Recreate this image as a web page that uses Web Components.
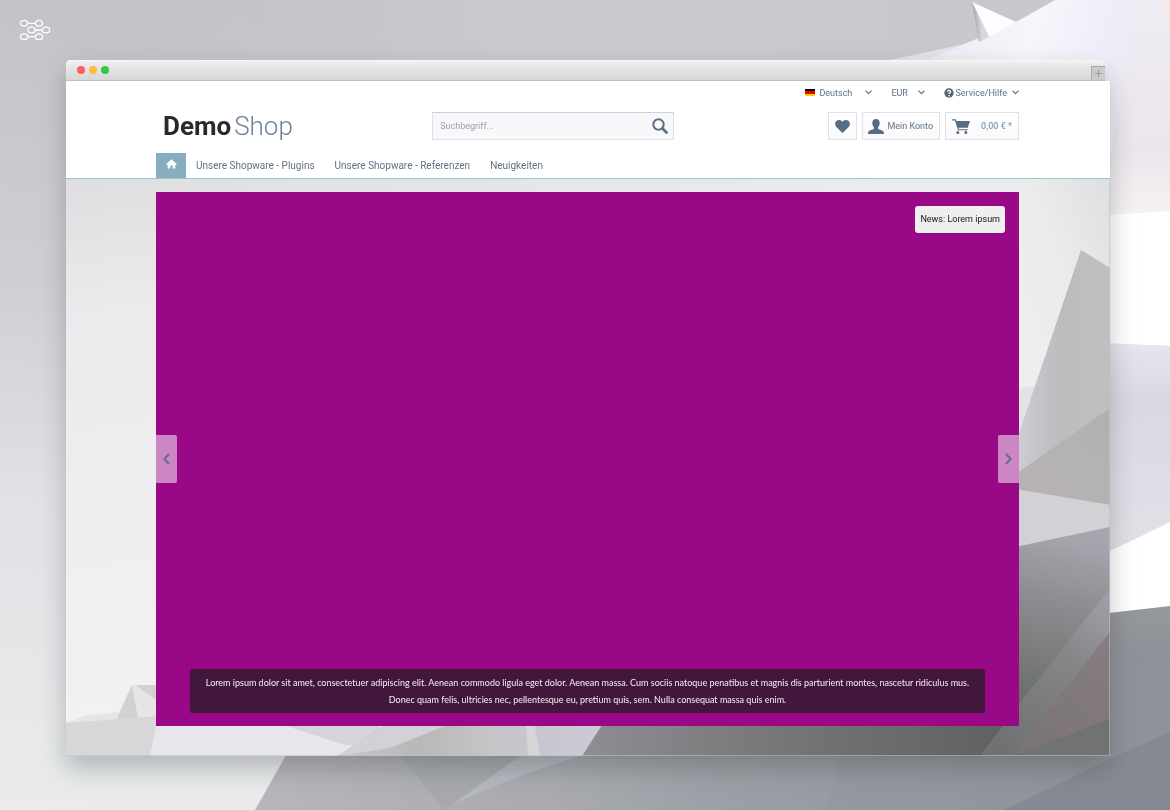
<!DOCTYPE html>
<html lang="de">
<head>
<meta charset="utf-8">
<meta name="viewport" content="width=device-width, initial-scale=1">
<title>DemoShop</title>
<style>
  html { height: 100%; }
  body { margin: 0; min-height: 100%; display: grid; background: #dcdce0; font-family: "Roboto", "Liberation Sans", sans-serif; font-size: 9px; color: #5f7285; }
</style>
</head>
<body>
<demo-page>
  <browser-window>
    <shop-header>
      <shop-action slot="actions" icon="heart" label="Merkzettel"></shop-action>
      <shop-action slot="actions" icon="user">Mein Konto</shop-action>
      <shop-action slot="actions" icon="cart" price>0,00 € *</shop-action>
    </shop-header>
    <shop-stage>
      <banner-slider>
        <span slot="news">News: Lorem ipsum</span>
        Lorem ipsum dolor sit amet, consectetuer adipiscing elit. Aenean commodo ligula eget dolor. Aenean massa. Cum sociis natoque penatibus et magnis dis parturient montes, nascetur ridiculus mus. Donec quam felis, ultricies nec, pellentesque eu, pretium quis, sem. Nulla consequat massa quis enim.
      </banner-slider>
    </shop-stage>
  </browser-window>
</demo-page>

<script>
const define = (name, markup, setup) => {
  const template = document.createElement('template');
  template.innerHTML = markup;
  customElements.define(name, class extends HTMLElement {
    constructor() {
      super();
      this.attachShadow({ mode: 'open' }).append(template.content.cloneNode(true));
    }
    connectedCallback() { if (setup) setup(this, this.shadowRoot); }
  });
};

define('demo-page', `
<style>
  :host { display: block; position: relative; overflow: hidden; box-sizing: border-box; padding: 60px 60px 54px 66px; }
  .backdrop { position: absolute; inset: 0; width: 100%; height: 100%; }
  .mark { position: absolute; left: 19px; top: 19px; width: 32px; height: 22px; }
  .frame { position: relative; }
</style>
<svg class="backdrop" viewBox="0 0 1170 810" preserveAspectRatio="none" aria-hidden="true">
  <defs>
    <linearGradient id="base" x1="0.1" y1="0" x2="0" y2="1"><stop offset="0" stop-color="#c4c2c9"/><stop offset=".35" stop-color="#cfced4"/><stop offset=".62" stop-color="#e1e2e5"/><stop offset="1" stop-color="#e9ebec"/></linearGradient>
    <linearGradient id="top" x1="0" y1="0" x2="1" y2="0"><stop offset="0" stop-color="#c2c0c7" stop-opacity="0"/><stop offset=".5" stop-color="#cccad0"/><stop offset="1" stop-color="#c8c7cc"/></linearGradient>
    <linearGradient id="wing" x1="0" y1="0" x2="1" y2=".25"><stop offset="0" stop-color="#e9e8f2"/><stop offset=".45" stop-color="#f6f6fc"/><stop offset="1" stop-color="#e7e6f4"/></linearGradient>
    <linearGradient id="facet" x1="0" y1="0" x2="0" y2="1"><stop offset="0" stop-color="#efecf3"/><stop offset=".7" stop-color="#ebe6ec"/><stop offset="1" stop-color="#f6f1f3"/></linearGradient>
    <linearGradient id="spike" x1="0" y1=".3" x2=".45" y2=".2"><stop offset="0" stop-color="#9d9ba2"/><stop offset="1" stop-color="#d8d7dc"/></linearGradient>
    <linearGradient id="lav" x1="0" y1="0" x2="0" y2="1"><stop offset="0" stop-color="#e7e5ee"/><stop offset=".25" stop-color="#dad8e3"/><stop offset="1" stop-color="#e3e0e7"/></linearGradient>
    <linearGradient id="floor" x1="0" y1="0" x2="1" y2="0"><stop offset="0" stop-color="#b6b7bb"/><stop offset=".35" stop-color="#a8aaaf"/><stop offset=".55" stop-color="#9ca0a6"/><stop offset="1" stop-color="#8f9399"/></linearGradient>
    <linearGradient id="fade" x1="0" y1="0" x2="0" y2="1"><stop offset="0" stop-color="#96989b"/><stop offset=".25" stop-color="#8d9299"/><stop offset="1" stop-color="#8f9399"/></linearGradient>
  </defs>
  <path fill="url(#base)" d="M0 0H1170V810H0z"/>
  <path fill="url(#top)" d="M0 0H1060V70H0z"/>
  <path fill="#e4e3ec" d="M890 60L960 45 989 37 940 60z"/>
  <path fill="url(#wing)" d="M918 64L1016 22 1055 0H1170V350H1100V64z"/>
  <path fill="#fdfdff" d="M972 2L1016 22 989 37z"/>
  <path fill="url(#spike)" d="M972 2L989 37 979 42z"/>
  <path fill="url(#facet)" d="M1136 0H1170V211L1110 214V160z"/>
  <path fill="#f5e9ec" d="M1158 0H1170V26z"/>
  <path fill="#fff" d="M1100 215L1170 211V346L1100 343z"/>
  <path fill="url(#lav)" d="M1100 343L1170 346V522L1100 556z"/>
  <path fill="#fff" d="M1100 556L1170 522V607L1100 614z"/>
  <path fill="url(#floor)" d="M289 750H1102V810H255z"/>
  <path fill="url(#fade)" d="M1100 614L1170 606V810H1100z"/>
  <path fill="#bbbcc6" opacity=".75" d="M520 756H580Q510 777 445 808z"/>
  <path fill="#a0a2a8" opacity=".5" d="M400 756H520L445 810z"/>
  <path fill="#92949a" opacity=".4" d="M840 756H1050V810H826z"/>
  <path fill="#858a93" d="M1170 732V810H1004L1112 758z"/>
</svg>
<svg class="mark" viewBox="0 0 32 22" fill="none" stroke="#fff" stroke-width="1.3" aria-hidden="true">
  <ellipse cx="5" cy="4.300" rx="3.600" ry="2.900"/><ellipse cx="20" cy="4.300" rx="3.600" ry="2.900"/><ellipse cx="12.500" cy="11" rx="3.600" ry="2.900"/><ellipse cx="27" cy="11" rx="3.600" ry="2.900"/><ellipse cx="5" cy="17.700" rx="3.600" ry="2.900"/><ellipse cx="20" cy="17.700" rx="3.600" ry="2.900"/>
  <path d="M8.600 4.300h7.800M16 11h7.500M8.600 17.700h7.800"/>
</svg>
<div class="frame"><slot></slot></div>`);

define('browser-window', `
<style>
  :host { display: block; filter: drop-shadow(0 12px 13px rgba(40,45,50,.28)); }
  .bar { display: flex; align-items: center; height: 21px; box-sizing: border-box; margin-right: 5px; padding-left: 11px; gap: 4px; border-radius: 4px 4px 0 0; border-bottom: 1px solid #bebebe; background: linear-gradient(#f5f5f5, #ebebeb 20%, #d6d6d6); }
  i { width: 8px; height: 8px; border-radius: 50%; background: var(--dot); }
  button { margin-left: auto; align-self: flex-end; width: 14px; height: 14px; padding: 0; border: solid #a9a9a9; border-width: 1px 0 0 1px; background: #cacaca; display: grid; place-items: center; }
  svg { width: 7px; height: 7px; }
</style>
<div class="bar"><i style="--dot:#fc605c"></i><i style="--dot:#fdbc40"></i><i style="--dot:#34c84a"></i>
  <button type="button" aria-label="Neuer Tab"><svg viewBox="0 0 7 7"><path d="M3.500 0v7M0 3.500h7" stroke="#999" fill="none"/></svg></button></div>
<slot></slot>`);

define('shop-header', `
<style>
  :host { display: block; background: #fff; border-bottom: 1px solid #9cc3cf; padding: 0 91px 0 90px; }
  .top { display: flex; justify-content: flex-end; align-items: center; height: 23px; }
  .pick { display: flex; align-items: center; }
  .flag { width: 10px; height: 7px; margin-right: 4px; background: linear-gradient(#000 33%, #e00 33% 66%, #fc0 66%); }
  select, .service { appearance: none; font: inherit; color: inherit; border: 0; padding: 0; background: none; }
  select { width: 46px; }
  .currency { margin-left: 19px; }
  .currency select { width: 27px; }
  .chev { width: 7px; height: 5px; fill: none; stroke: #5f7285; stroke-width: 1.200; }
  .service { display: flex; align-items: center; margin-left: 19px; gap: 1px; }
  .service .chev { margin-left: 4px; }
  .help { width: 10px; height: 10px; }
  .main { display: grid; grid-template-columns: 32% 28% 1fr; align-items: center; height: 28px; margin-top: 8px; }
  .logo { padding-left: 7px; font-size: 26px; line-height: 28px; color: #6c8096; font-weight: 300; text-decoration: none; display: flex; gap: 3px; }
  .logo b { color: #26292d; font-weight: 700; }
  form { display: flex; align-items: center; height: 28px; box-sizing: border-box; border: 1px solid #dfdfea; border-top-color: #cfcfe0; background: #f8f8fb; }
  input { flex: 1; min-width: 0; border: 0; background: none; padding: 0 7px; font: inherit; color: inherit; outline: 0; }
  input::placeholder { color: #94a2b2; opacity: 1; }
  form button { border: 0; background: none; padding: 0 5px 0 0; display: flex; }
  form svg { width: 16px; height: 16px; }
  .actions { display: flex; justify-content: flex-end; gap: 5px; }
  nav { display: flex; height: 25px; margin-top: 13px; font-size: 10px; }
  nav a { display: flex; align-items: center; color: inherit; text-decoration: none; margin-left: 20px; }
  nav a.home { width: 30px; justify-content: center; background: #86aebf; margin: 0 -10px 0 0; }
  .home svg { width: 11px; height: 10px; margin-bottom: 3px; }
</style>
<div class="top">
  <label class="pick"><span class="flag"></span><select aria-label="Sprache"><option>Deutsch</option></select><svg class="chev" viewBox="0 0 7 5"><path d="M.5.700l3 3 3-3"/></svg></label>
  <label class="pick currency"><select aria-label="Währung"><option>EUR</option></select><svg class="chev" viewBox="0 0 7 5"><path d="M.5.700l3 3 3-3"/></svg></label>
  <button class="service" type="button"><svg class="help" viewBox="0 0 10 10"><circle cx="5" cy="5" r="4.700" fill="#52677e"/><path d="M3.400 3.800Q3.500 2.300 5 2.300T6.600 3.800C6.600 4.900 5 4.800 5 6.100" fill="none" stroke="#fff" stroke-width="1.300"/><circle cx="5" cy="7.700" r=".8" fill="#fff"/></svg><span>Service/Hilfe</span><svg class="chev" viewBox="0 0 7 5"><path d="M.5.700l3 3 3-3"/></svg></button>
</div>
<div class="main">
  <a class="logo" href="#"><b>Demo</b><span>Shop</span></a>
  <form role="search"><input type="text" placeholder="Suchbegriff..." aria-label="Suchbegriff"><button type="button" aria-label="Suchen"><svg viewBox="0 0 16 16" fill="none" stroke="#5b7088"><circle cx="6.500" cy="6.500" r="5.200" stroke-width="2"/><path d="M10.500 10.500l4 4" stroke-width="2.800" stroke-linecap="round"/></svg></button></form>
  <div class="actions"><slot name="actions"></slot></div>
</div>
<nav>
  <a class="home" href="#" aria-label="Startseite"><svg viewBox="0 0 11 10"><path fill="#fff" d="M5.500.3L.2 5.300l.6.600h.9V9.500h2.600V6.500h2.400v3h2.600V5.900h.9l.6-.6z"/></svg></a>
  <a href="#">Unsere Shopware - Plugins</a><a href="#">Unsere Shopware - Referenzen</a><a href="#">Neuigkeiten</a>
</nav>`);

const actionIcons = {
  heart: '<svg width="15" height="13" viewBox="0 0 15 13"><path d="M7.500 13L1.300 7C-.3 5.300-.2 2.500 1.400 1.100 3.100-.4 5.900-.3 7.500 1.700 9.100-.3 11.900-.4 13.600 1.100c1.600 1.400 1.700 4.200.1 5.900z"/></svg>',
  user: '<svg width="16" height="15" viewBox="0 0 16 15"><path d="M8 0c2.500 0 3.800 1.700 3.700 4.200-.1 2-.9 3.300-1.700 4.200v1.400c1 1 5.100 1.300 5.800 3.300l.2 1.900H0l.2-1.900c.7-2 4.800-2.300 5.800-3.300V8.400C5.200 7.500 4.400 6.200 4.300 4.200 4.200 1.700 5.500 0 8 0z"/></svg>',
  cart: '<svg width="18" height="15" viewBox="0 0 18 15"><path d="M0 .2h3.600l.7 1.900H18l-2.300 6.700H6.500l.5 1.500h8.700v1H6.100L2.900 1.500H0z"/><circle cx="5.800" cy="13.400" r="1.500"/><circle cx="13.800" cy="13.400" r="1.500"/></svg>'
};
define('shop-action', `
<style>
  :host { display: block; }
  button { display: flex; align-items: center; height: 28px; box-sizing: border-box; padding: 0 6px; gap: 3px; border: 1px solid #e0e0eb; background: linear-gradient(#fff, #f9f9fb); font: inherit; color: inherit; white-space: nowrap; }
  .icon { display: flex; fill: #566c84; }
  :host([icon="user"]) button { padding: 0 6px 0 5px; }
  :host([price]) button { gap: 11px; color: #72a4b7; font-weight: 500; }
</style>
<button type="button"><span class="icon"></span><slot></slot></button>`, (host, root) => {
  root.querySelector('.icon').innerHTML = actionIcons[host.getAttribute('icon')];
  if (host.hasAttribute('label')) root.querySelector('button').setAttribute('aria-label', host.getAttribute('label'));
});

define('shop-stage', `
<style>
  :host { display: block; position: relative; padding: 13px 91px 30px 90px; overflow: hidden; }
  svg { position: absolute; inset: 0; width: 100%; height: 100%; }
  .content { position: relative; }
  :host::after { content: ""; position: absolute; inset: 0; border: solid rgba(190,192,197,.6); border-width: 0 1px 1px 0; pointer-events: none; }
</style>
<svg viewBox="66 179 1044 577" preserveAspectRatio="none" aria-hidden="true">
  <defs>
    <linearGradient id="wall" x1="0" y1="0" x2=".3" y2="1"><stop offset="0" stop-color="#dedddf"/><stop offset=".22" stop-color="#ebeaec"/><stop offset="1" stop-color="#f3f3f5"/></linearGradient>
    <linearGradient id="corner" x1="0" y1="1" x2="1" y2="0"><stop offset="0" stop-color="#f0f0f2"/><stop offset=".6" stop-color="#ebebec"/><stop offset="1" stop-color="#dfdee0"/></linearGradient>
    <linearGradient id="peak" x1="0" y1="0" x2="1" y2="0"><stop offset="0" stop-color="#d0d0d8"/><stop offset=".25" stop-color="#c5c5cc"/><stop offset=".5" stop-color="#bdbcbd"/><stop offset="1" stop-color="#bfbec1"/></linearGradient>
    <linearGradient id="warm" x1="0" y1="1" x2=".8" y2="0"><stop offset="0" stop-color="#b8b3b4"/><stop offset="1" stop-color="#b2b1b1"/></linearGradient>
    <linearGradient id="dark" x1=".1" y1="0" x2="0" y2="1"><stop offset="0" stop-color="#a7a4ad"/><stop offset=".3" stop-color="#8b8c8f"/><stop offset=".75" stop-color="#6a6d6c"/><stop offset="1" stop-color="#606262"/></linearGradient>
    <linearGradient id="slope" x1=".9" y1="0" x2=".3" y2="1"><stop offset="0" stop-color="#a09fa6"/><stop offset=".4" stop-color="#858688"/><stop offset="1" stop-color="#6f7172"/></linearGradient>
    <linearGradient id="ground" x1="0" y1="0" x2="1" y2="0"><stop offset="0" stop-color="#8f8d92"/><stop offset=".5" stop-color="#737475"/><stop offset="1" stop-color="#5d5f60"/></linearGradient>
    <linearGradient id="fold" x1="0" y1="0" x2="1" y2="0"><stop offset="0" stop-color="#c8c7cc"/><stop offset=".3" stop-color="#b8b8b8"/><stop offset=".6" stop-color="#c6c5c8"/><stop offset="1" stop-color="#cbc9d6"/></linearGradient>
  </defs>
  <path fill="url(#wall)" d="M66 179H1110V756H66z"/>
  <path fill="url(#corner)" d="M1010 192L1040 179H1110V440H1010z"/>
  <path fill="#e3e3e5" d="M1010 388L1040 386 1020 440H1010z"/>
  <path fill="url(#peak)" d="M1081 250L1110 268V505L1010 490V460z"/>
  <path fill="url(#warm)" d="M1110 408V505L1010 490V478z"/>
  <path fill="#d2d2d6" d="M1010 488L1110 505V528L1010 548z"/>
  <path fill="url(#dark)" d="M1010 548L1110 527V756H1010z"/>
  <path fill="url(#ground)" d="M602 722H1019V756H582z"/>
  <path fill="url(#slope)" d="M1110 588L1019 704 980 756H1110z"/>
  <path fill="#807579" opacity=".7" d="M1110 632L1012 756 1110 719z"/>
  <path fill="#717274" d="M1110 719V756H1014z"/>
  <path fill="#e5e4e7" d="M66 723L84 716 119 712 132 685H160V756H66z"/>
  <path fill="#d1d0d3" d="M132 685L138 719H117z"/>
  <path fill="#d8cfd0" d="M136 685H160V703L145 692z"/>
  <path fill="#d7d6d8" d="M66 723L160 716 151 756H66z"/>
  <path fill="#e8e6ea" d="M157 720H410L345 756H150z"/>
  <path fill="#d5d4da" d="M280 724H376L400 744 345 745z"/>
  <path fill="url(#fold)" d="M337 756L390 722H604L582 756z"/>
  <path fill="#d2d1d5" d="M385 726H445L390 748 337 756z"/>
  <path fill="#dad9da" opacity=".8" d="M526 722H534L540 756H528z"/>
</svg>
<div class="content"><slot></slot></div>`);

define('banner-slider', `
<style>
  :host { display: flex; flex-direction: column; justify-content: space-between; box-sizing: border-box; aspect-ratio: 863 / 534; padding: 14px 34px 13px; background: #990987; position: relative; }
  .news { align-self: flex-end; margin-right: -20px; padding: 0 5px; height: 27px; line-height: 27px; background: #efeff0; border-radius: 3px; color: #151515; text-decoration: none; }
  p { margin: 0; padding: 5px 10px; border-radius: 2px; background: #41183c; color: #f6eff6; text-align: center; line-height: 17px; font-family: "Lato", "Roboto", sans-serif; }
  button { position: absolute; top: 243px; width: 21px; height: 48px; padding: 0; border: 0; background: #cc86c4; display: grid; place-items: center; }
  .prev { left: 0; border-radius: 0 2px 2px 0; }
  .next { right: 0; border-radius: 2px 0 0 2px; }
  svg { width: 7px; height: 12px; fill: none; stroke: #5f7090; stroke-width: 2; }
</style>
<a class="news" href="#"><slot name="news"></slot></a>
<button class="prev" type="button" aria-label="Zurück"><svg viewBox="0 0 7 12"><path d="M6 1L1.300 6 6 11"/></svg></button>
<button class="next" type="button" aria-label="Weiter"><svg viewBox="0 0 7 12"><path d="M1 1l4.700 5L1 11"/></svg></button>
<p><slot></slot></p>`);
</script>
</body>
</html>
